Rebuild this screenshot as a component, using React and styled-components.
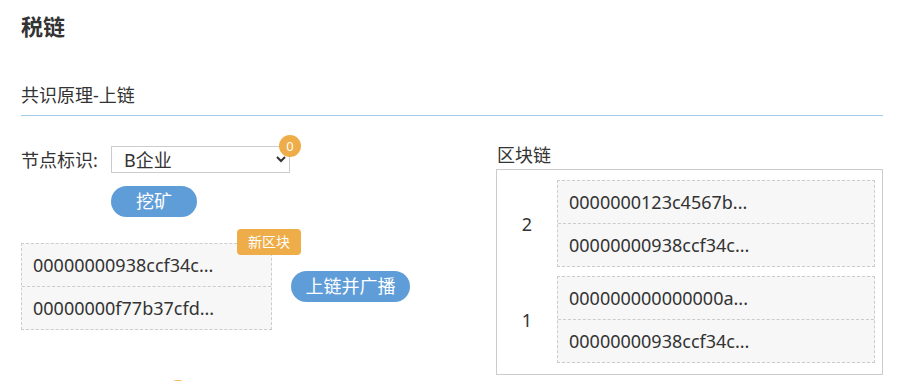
import React from 'react';
import styled, { createGlobalStyle } from 'styled-components';

const color = {
  text: '#333333',
  blue: '#5f9dd8',
  orange: '#eead48',
  line: '#9fcbe8',
  border: '#cccccc',
  cell: '#f7f7f7',
};

const GlobalStyle = createGlobalStyle`
  html, body {
    margin: 0;
    padding: 0;
    overflow: hidden;
    background: #fff;
  }
  body {
    font-family: "Noto Sans", "Noto Sans CJK SC", sans-serif;
    color: ${color.text};
  }
`;

const Page = styled.div`
  padding: 0 20px 0 21px;
  width: 903px;
  box-sizing: border-box;
`;

const Title = styled.h1`
  margin: 0;
  padding-top: 12px;
  font-size: 22px;
  line-height: 28px;
  font-weight: 700;
`;

const SubTitle = styled.h2`
  margin: 43px 0 0;
  padding-bottom: 8px;
  font-size: 18px;
  line-height: 24px;
  font-weight: 400;
  border-bottom: 1px solid ${color.line};
`;

const Main = styled.div`
  display: flex;
  margin-top: 27px;
`;

const LeftCol = styled.div`
  width: 475px;
  padding-top: 3px;
  display: flex;
  flex-direction: column;
`;

const RightCol = styled.div`
  width: 387px;
  display: flex;
  flex-direction: column;
`;

const FieldRow = styled.div`
  display: flex;
  align-items: center;
  height: 27px;
`;

const Label = styled.span`
  width: 90px;
  font-size: 18px;
  line-height: 24px;
`;

const SelectWrap = styled.div`
  position: relative;
  width: 179px;
  height: 27px;
`;

const Select = styled.select`
  width: 100%;
  height: 100%;
  box-sizing: border-box;
  border: 1px solid ${color.border};
  border-radius: 0;
  background: #fff;
  color: ${color.text};
  font-family: inherit;
  font-size: 18px;
  padding: 0 8px;
`;

const Badge = styled.span`
  position: absolute;
  top: ${(p) => p.$top}px;
  ${(p) => (p.$left !== undefined ? `left: ${p.$left}px;` : `right: ${p.$right}px;`)}
  min-width: ${(p) => (p.$round ? '22px' : '64px')};
  height: ${(p) => (p.$round ? '22px' : '26px')};
  box-sizing: border-box;
  border-radius: ${(p) => (p.$round ? '50%' : '4px')};
  background: ${color.orange};
  color: #fff;
  font-size: ${(p) => (p.$round ? '13px' : '14px')};
  line-height: ${(p) => (p.$round ? '22px' : '26px')};
  text-align: center;
`;

const Button = styled.button`
  height: 31px;
  width: ${(p) => p.$width}px;
  border: none;
  border-radius: 16px;
  background: ${color.blue};
  color: #fff;
  font-family: inherit;
  font-size: 18px;
  line-height: 31px;
  padding: 0;
  cursor: pointer;
`;

const MineRow = styled.div`
  margin-top: 13px;
  padding-left: 90px;
`;

const PendingRow = styled.div`
  display: flex;
  align-items: center;
  gap: 19px;
  margin-top: 26px;
`;

const BlockBox = styled.div`
  position: relative;
  box-sizing: border-box;
  width: ${(p) => p.$width || 'auto'};
  flex: ${(p) => (p.$width ? 'none' : '1')};
  border: 1px dashed ${color.border};
  background: ${color.cell};
`;

const HashRow = styled.div`
  height: 42px;
  padding-left: 11px;
  display: flex;
  align-items: center;
  font-size: 18px;
  & + & {
    border-top: 1px dashed ${color.border};
  }
`;

const Spacer = styled.div`
  position: relative;
  margin-top: 50px;
  margin-left: 146px;
  height: 22px;
`;

const ChainLabel = styled.div`
  font-size: 18px;
  line-height: 24px;
  padding-left: 1px;
`;

const ChainBox = styled.div`
  margin-top: 2px;
  border: 1px solid ${color.border};
  padding: 10px 7px 11px 0;
  display: flex;
  flex-direction: column;
  gap: 9px;
`;

const ChainItem = styled.div`
  display: flex;
  align-items: center;
`;

const Height = styled.div`
  width: 60px;
  text-align: center;
  font-size: 18px;
`;

const pending = ['00000000938ccf34c...', '00000000f77b37cfd...'];

const chain = [
  { height: 2, hashes: ['0000000123c4567b...', '00000000938ccf34c...'] },
  { height: 1, hashes: ['000000000000000a...', '00000000938ccf34c...'] },
];

export default function App() {
  return (
    <>
      <GlobalStyle />
      <Page>
        <Title>税链</Title>
        <SubTitle>共识原理-上链</SubTitle>
        <Main>
          <LeftCol>
            <FieldRow>
              <Label>节点标识:</Label>
              <SelectWrap>
                <Select defaultValue="B">
                  <option value="A">A企业</option>
                  <option value="B">B企业</option>
                  <option value="C">C企业</option>
                </Select>
                <Badge $round $top={-11} $right={-11}>0</Badge>
              </SelectWrap>
            </FieldRow>
            <MineRow>
              <Button $width={86}>挖矿</Button>
            </MineRow>
            <PendingRow>
              <BlockBox $width="251px">
                {pending.map((h) => (
                  <HashRow key={h}>{h}</HashRow>
                ))}
                <Badge $top={-15} $right={-30}>新区块</Badge>
              </BlockBox>
              <Button $width={119}>上链并广播</Button>
            </PendingRow>
            <Spacer>
              <Badge $round $top={0} $left={0} />
            </Spacer>
          </LeftCol>
          <RightCol>
            <ChainLabel>区块链</ChainLabel>
            <ChainBox>
              {chain.map((b) => (
                <ChainItem key={b.height}>
                  <Height>{b.height}</Height>
                  <BlockBox>
                    {b.hashes.map((h, i) => (
                      <HashRow key={i}>{h}</HashRow>
                    ))}
                  </BlockBox>
                </ChainItem>
              ))}
            </ChainBox>
          </RightCol>
        </Main>
      </Page>
    </>
  );
}
